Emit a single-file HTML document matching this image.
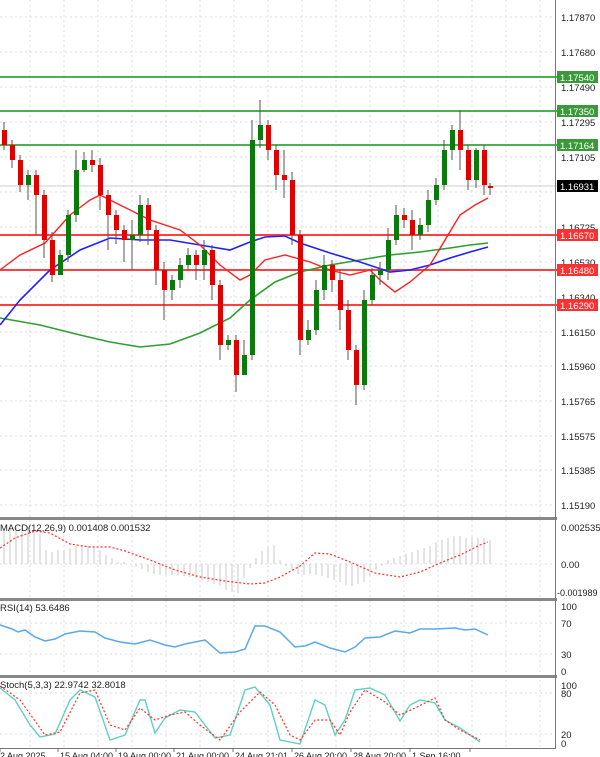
<!DOCTYPE html><html><head><style>
body{margin:0;background:#fff;}
svg{display:block;font-family:"Liberation Sans",sans-serif;}
</style></head><body>
<svg width="600" height="757" viewBox="0 0 600 757" xmlns="http://www.w3.org/2000/svg">
<rect width="600" height="757" fill="#fff"/>
<g stroke="#ddd" stroke-dasharray="2,3" stroke-width="1">
<path d="M30 0V748M64 0V748M98 0V748M132 0V748M166 0V748M200 0V748M234 0V748M268 0V748M302 0V748M336 0V748M370 0V748M404 0V748M438 0V748M472 0V748M506 0V748M540 0V748"/>
<path d="M0 17H555M0 52H555M0 87H555M0 122H555M0 157H555M0 192H555M0 227H555M0 262H555M0 297H555M0 332H555M0 366H555M0 401H555M0 436H555M0 470H555M0 505H555"/>
<path d="M0 564H555M0 623H555M0 654H555M0 693H555M0 734H555"/>
</g>
<g stroke-width="2">
<path d="M0 77H557M0 111H557M0 145H557" stroke="#4caf50"/>
<path d="M0 235H557M0 270H557M0 305H557" stroke="#ff4040"/>
</g>
<path d="M0 186H557" stroke="#ccc"/>
<polyline fill="none" stroke="#2e9e2e" stroke-width="1.6" points="0,318 40,325 80,335 110,342 140,347 170,344 200,333 230,318 250,300 275,282 300,272 330,265 360,260 390,255 420,252 450,248 470,245 488,243"/>
<polyline fill="none" stroke="#2020ff" stroke-width="1.6" points="0,325 20,300 50,270 80,250 110,238 140,240 170,240 200,245 230,250 250,242 265,237 285,236 300,243 330,253 360,262 390,272 410,270 430,265 450,258 470,252 488,247"/>
<polyline fill="none" stroke="#ff2020" stroke-width="1.4" points="0,270 20,255 45,243 70,215 90,200 100,195 120,205 150,220 180,230 200,245 220,265 240,280 250,275 265,260 285,255 310,262 330,270 350,275 370,270 380,280 395,292 410,282 430,265 445,240 460,215 475,205 488,198"/>
<g stroke="#555" stroke-width="1">
<path d="M4 122V150M12 140V168M20 155V192M28 170V200M36 170V235M44 190V258M52 232V282M60 250V270M68 210V262M76 150V222M84 152V172M92 150V172M100 158V210M108 190V250M116 210V244M124 225V262M132 220V270M140 195V242M148 198V245M156 225V285M164 262V320M172 275V300M180 258V288M188 248V270M196 250V280M204 240V280M212 245V300M220 280V360M228 335V350M236 335V392M244 340V365M252 120V360M260 100V148M268 120V160M276 145V190M284 150V198M292 172V245M300 230V355M308 320V345M316 280V335M324 255V300M332 260V292M340 270V330M348 300V360M356 345V405M364 290V390M372 268V305M380 262V285M388 228V280M396 205V245M404 208V228M412 210V250M420 218V240M428 190V232M436 178V205M444 140V190M452 125V160M460 110V170M468 145V190M476 148V188M484 145V195M490 183V195"/>
</g>
<g fill="#e00000">
<rect x="2" y="130" width="5" height="15"/><rect x="10" y="145" width="5" height="15"/><rect x="18" y="160" width="5" height="25"/><rect x="34" y="175" width="5" height="20"/><rect x="42" y="195" width="5" height="45"/><rect x="50" y="240" width="5" height="35"/><rect x="90" y="160" width="5" height="5"/><rect x="98" y="165" width="5" height="30"/><rect x="106" y="195" width="5" height="20"/><rect x="114" y="215" width="5" height="15"/><rect x="122" y="230" width="5" height="10"/><rect x="146" y="205" width="5" height="25"/><rect x="154" y="230" width="5" height="40"/><rect x="162" y="270" width="5" height="20"/><rect x="194" y="255" width="5" height="10"/><rect x="210" y="250" width="5" height="35"/><rect x="218" y="285" width="5" height="60"/><rect x="234" y="340" width="5" height="35"/><rect x="266" y="125" width="5" height="25"/><rect x="274" y="150" width="5" height="25"/><rect x="282" y="175" width="5" height="5"/><rect x="290" y="180" width="5" height="55"/><rect x="298" y="235" width="5" height="105"/><rect x="330" y="265" width="5" height="15"/><rect x="338" y="280" width="5" height="30"/><rect x="346" y="310" width="5" height="40"/><rect x="354" y="350" width="5" height="35"/><rect x="402" y="215" width="5" height="5"/><rect x="410" y="220" width="5" height="15"/><rect x="458" y="130" width="5" height="20"/><rect x="466" y="150" width="5" height="30"/><rect x="482" y="150" width="5" height="35"/><rect x="488" y="186" width="5" height="2"/>
</g>
<g fill="#0a7a0a">
<rect x="26" y="175" width="5" height="10"/><rect x="58" y="255" width="5" height="20"/><rect x="66" y="215" width="5" height="40"/><rect x="74" y="170" width="5" height="45"/><rect x="82" y="160" width="5" height="10"/><rect x="130" y="235" width="5" height="5"/><rect x="138" y="205" width="5" height="30"/><rect x="170" y="280" width="5" height="10"/><rect x="178" y="265" width="5" height="15"/><rect x="186" y="255" width="5" height="10"/><rect x="202" y="250" width="5" height="15"/><rect x="226" y="340" width="5" height="5"/><rect x="242" y="355" width="5" height="20"/><rect x="250" y="140" width="5" height="215"/><rect x="258" y="125" width="5" height="15"/><rect x="306" y="330" width="5" height="10"/><rect x="314" y="290" width="5" height="40"/><rect x="322" y="265" width="5" height="25"/><rect x="362" y="300" width="5" height="85"/><rect x="370" y="275" width="5" height="25"/><rect x="378" y="270" width="5" height="5"/><rect x="386" y="240" width="5" height="30"/><rect x="394" y="215" width="5" height="25"/><rect x="418" y="225" width="5" height="10"/><rect x="426" y="200" width="5" height="25"/><rect x="434" y="185" width="5" height="15"/><rect x="442" y="150" width="5" height="35"/><rect x="450" y="130" width="5" height="20"/><rect x="474" y="150" width="5" height="30"/>
</g>
<g fill="#888"><rect x="0" y="517" width="557" height="3"/><rect x="0" y="598" width="557" height="3"/><rect x="0" y="675" width="557" height="3"/></g>
<path d="M555.5 0V748M0 748.5H556" stroke="#777"/>
<g stroke="#c8c8c8" stroke-width="1">
<path d="M4 564V530M10 564V528M16 564V526M22 564V526M28 564V527M34 564V530M40 564V534M46 564V550M52 564V552M58 564V550M64 564V550M70 564V548M76 564V546M82 564V546M88 564V546M94 564V548M100 564V550M106 564V555M112 564V558M118 564V562M124 564V562M130 564V564M136 564V567M142 564V569M148 564V572M154 564V574M160 564V575M166 564V575M172 564V575M178 564V575M184 564V576M190 564V577M196 564V578M202 564V580M208 564V582M214 564V584M220 564V586M226 564V590M232 564V592M238 564V593M244 564V578M250 564V568M256 564V558M262 564V551M268 564V547M274 564V545M280 564V560M286 564V566M292 564V570M298 564V574M304 564V575M310 564V574M316 564V575M322 564V576M328 564V578M334 564V580M340 564V582M346 564V585M352 564V586M358 564V584M364 564V582M370 564V576M376 564V570M382 564V566M388 564V560M394 564V558M400 564V556M406 564V554M412 564V552M418 564V550M424 564V548M430 564V546M436 564V542M442 564V540M448 564V538M454 564V536M460 564V536M466 564V538M472 564V537M478 564V538M484 564V538M490 564V540"/>
</g>
<polyline fill="none" stroke="#ff3030" stroke-width="1.2" stroke-dasharray="2,2" points="0,548 15,538 35,531 50,533 70,544 90,547 110,547 125,551 150,560 175,570 200,577 225,581 250,584 265,583 280,577 300,566 315,553 330,554 350,562 375,573 400,577 420,572 440,563 460,555 480,545 488,542"/>
<text x="0" y="531" font-size="9.5" fill="#222">MACD(12,26,9) 0.001408 0.001532</text>
<polyline fill="none" stroke="#5aa8f0" stroke-width="1.5" points="0,625 12,629 18,632 25,630 35,637 45,641 55,639 65,634 80,631 95,632 105,638 120,642 135,644 150,640 165,645 175,647 185,644 205,640 220,653 235,652 245,649 255,626 265,626 280,632 295,647 305,646 315,642 330,648 345,652 355,647 365,638 380,637 395,631 410,633 420,629 435,629 455,628 465,630 475,629 488,635"/>
<text x="0" y="611" font-size="9.5" fill="#222">RSI(14) 53.6486</text>
<polyline fill="none" stroke="#60d0c0" stroke-width="1.4" points="0,688 15,700 30,725 40,737 55,734 70,700 80,690 95,697 110,740 125,735 140,700 145,700 155,733 165,718 180,710 195,712 215,738 230,735 245,690 255,687 270,705 280,740 300,744 315,700 325,705 335,735 345,720 355,690 370,688 385,695 400,721 410,705 420,700 435,703 445,720 460,728 480,742"/>
<polyline fill="none" stroke="#ff3030" stroke-width="1.2" stroke-dasharray="2,2" points="0,686 20,700 45,735 60,732 80,693 95,690 110,725 125,730 140,708 155,720 170,715 185,712 200,725 220,740 240,712 260,692 275,705 290,735 300,740 315,720 330,720 340,735 350,712 365,690 385,702 400,715 415,708 435,698 445,720 460,730 480,740"/>
<text x="0" y="688" font-size="9.5" fill="#222">Stoch(5,3,3) 22.9742 32.8018</text>
<g font-size="9.5" fill="#222">
<text x="561" y="21">1.17870</text><text x="561" y="56">1.17680</text><text x="561" y="91">1.17490</text><text x="561" y="126">1.17295</text><text x="561" y="161">1.17105</text><text x="561" y="231">1.16725</text><text x="561" y="266">1.16530</text><text x="561" y="301">1.16340</text><text x="561" y="336">1.16150</text><text x="561" y="370">1.15960</text><text x="561" y="405">1.15765</text><text x="561" y="440">1.15575</text><text x="561" y="474">1.15385</text><text x="561" y="509">1.15190</text>
<text x="561" y="531">0.002535</text><text x="561" y="568">0.00</text><text x="557" y="596" font-size="9">-0.001989</text>
<text x="561" y="610">100</text><text x="561" y="627">70</text><text x="561" y="658">30</text><text x="561" y="675">0</text>
<text x="561" y="689">100</text><text x="561" y="697">80</text><text x="561" y="738">20</text><text x="561" y="747">0</text>
</g>
<g font-size="9.5">
<rect x="557" y="71" width="41" height="12" fill="#3a9a3a"/><text x="560" y="81" fill="#fff">1.17540</text>
<rect x="557" y="105" width="41" height="12" fill="#3a9a3a"/><text x="560" y="115" fill="#fff">1.17350</text>
<rect x="557" y="139" width="41" height="12" fill="#3a9a3a"/><text x="560" y="149" fill="#fff">1.17164</text>
<rect x="557" y="180" width="41" height="12" fill="#000"/><text x="560" y="190" fill="#fff">1.16931</text>
<rect x="557" y="229" width="41" height="12" fill="#ff3030"/><text x="560" y="239" fill="#fff">1.16670</text>
<rect x="557" y="264" width="41" height="12" fill="#ff3030"/><text x="560" y="274" fill="#fff">1.16480</text>
<rect x="557" y="299" width="41" height="12" fill="#ff3030"/><text x="560" y="309" fill="#fff">1.16290</text>
</g>
<g font-size="9" fill="#222">
<text x="0" y="759">2 Aug 2025</text><text x="60" y="759">15 Aug 04:00</text><text x="118" y="759">19 Aug 00:00</text><text x="176" y="759">21 Aug 00:00</text><text x="235" y="759">24 Aug 21:01</text><text x="294" y="759">26 Aug 20:00</text><text x="353" y="759">28 Aug 20:00</text><text x="412" y="759">1 Sep 16:00</text>
</g>
<path d="M0 748V752M58 748V752M116 748V752M174 748V752M233 748V752M292 748V752M351 748V752M410 748V752M470 748V752" stroke="#777"/>
</svg>
</body></html>
